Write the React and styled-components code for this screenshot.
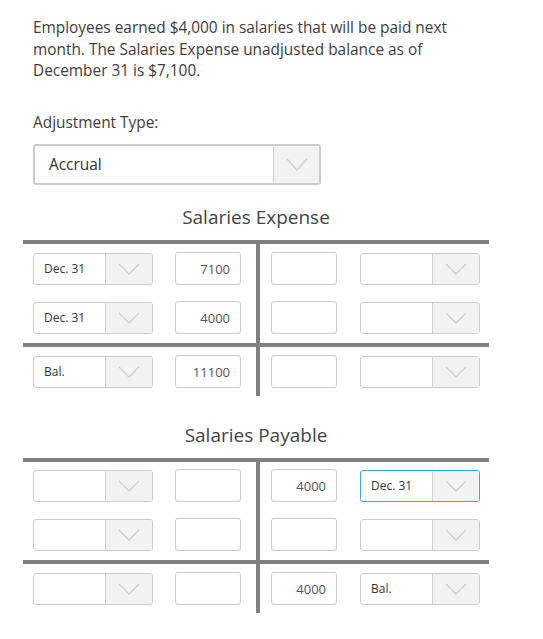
import styled, { createGlobalStyle } from "styled-components";

const GlobalStyle = createGlobalStyle`
  body {
    margin: 0;
    background: #fff;
    font-family: "Open Sans", "Liberation Sans", sans-serif;
    color: #333;
  }
`

const Page = styled.div`
  padding: 17px 0 20px 23px;
  width: 466px;
`

const Question = styled.p`
  margin: 0 0 0 10px;
  font-size: 15.4px;
  line-height: 21.5px;
  color: #3d3d3d;
`

const Label = styled.div`
  margin: 30px 0 0 10px;
  font-size: 15.4px;
  line-height: 22px;
  color: #3d3d3d;
`

const SelectBox = styled.div`
  display: flex;
  box-sizing: border-box;
  width: ${p => p.$width}px;
  height: ${p => p.$height}px;
  border: ${p => p.$thick ? 2 : 1}px solid ${p => p.$focus ? "#3aabd9" : "#cccccc"};
  border-radius: 3px;
  background: #fff;
  overflow: hidden;
`

const SelectValue = styled.div`
  flex: 1;
  display: flex;
  align-items: center;
  padding-left: ${p => p.$pad}px;
  font-size: ${p => p.$size}px;
  color: #333;
`

const SelectButton = styled.div`
  width: ${p => p.$width}px;
  display: flex;
  align-items: center;
  justify-content: center;
  background: #f2f2f2;
  border-left: 1px solid #d0d0d0;
`

const MainSelectWrap = styled.div`
  margin: 10px 0 0 10px;
`

const Title = styled.div`
  margin: 19px 0 10px;
  text-align: center;
  font-size: 19px;
  line-height: 26px;
  color: #444;
`

const Account = styled.div`
  border-top: 4px solid #808080;
  margin-bottom: 26px;
`

const Section = styled.div`
  display: grid;
  grid-template-columns: 233px 4px 229px;
`

const Divider = styled.div`
  background: #808080;
`

const HLine = styled.div`
  height: 4px;
  background: #808080;
`

const Side = styled.div`
  display: flex;
  flex-direction: column;
  gap: 17px;
  padding: ${p => p.$top}px 0 ${p => p.$bottom}px ${p => p.$left}px;
`

const Row = styled.div`
  display: flex;
  align-items: center;
  gap: ${p => p.$gap}px;
  height: 32px;
`

const AmountBox = styled.div`
  box-sizing: border-box;
  width: 66px;
  height: 33px;
  border: 1px solid #cccccc;
  border-radius: 3px;
  display: flex;
  align-items: center;
  justify-content: flex-end;
  padding-right: 10px;
  font-size: 13px;
  color: #555;
`

function Chevron({ w = 20, h = 10 }) {
  return (
    <svg width={w + 2} height={h + 2} viewBox={`0 0 ${w + 2} ${h + 2}`}>
      <polyline
        points={`1,1 ${w / 2 + 1},${h + 1} ${w + 1},1`}
        fill="none"
        stroke="#cfcfcf"
        strokeWidth="1.3"
      />
    </svg>
  )
}

function Dropdown({ value, focus }) {
  return (
    <SelectBox $width={120} $height={32} $focus={focus}>
      <SelectValue $pad={10} $size={12}>{value}</SelectValue>
      <SelectButton $width={46}>
        <Chevron w={20} h={10} />
      </SelectButton>
    </SelectBox>
  )
}

function LeftEntry({ date, amount }) {
  return (
    <Row $gap={22}>
      <Dropdown value={date} />
      <AmountBox>{amount}</AmountBox>
    </Row>
  )
}

function RightEntry({ date, amount, focus }) {
  return (
    <Row $gap={23}>
      <AmountBox>{amount}</AmountBox>
      <Dropdown value={date} focus={focus} />
    </Row>
  )
}

function TAccount({ debits, credits, debitBal, creditBal, firstPad }) {
  return (
    <Account>
      <Section>
        <Side $top={firstPad} $bottom={9} $left={10}>
          {debits.map((d, i) => <LeftEntry key={i} {...d} />)}
        </Side>
        <Divider />
        <Side $top={firstPad} $bottom={9} $left={11}>
          {credits.map((c, i) => <RightEntry key={i} {...c} />)}
        </Side>
      </Section>
      <HLine />
      <Section>
        <Side $top={9} $bottom={8} $left={10}>
          <LeftEntry {...debitBal} />
        </Side>
        <Divider />
        <Side $top={9} $bottom={8} $left={11}>
          <RightEntry {...creditBal} />
        </Side>
      </Section>
    </Account>
  )
}

export default function App() {
  return (
    <Page>
      <GlobalStyle />
      <Question>
        Employees earned $4,000 in salaries that will be paid next month. The Salaries
        Expense unadjusted balance as of December 31 is $7,100.
      </Question>
      <Label>Adjustment Type:</Label>
      <MainSelectWrap>
        <SelectBox $width={288} $height={41} $thick>
          <SelectValue $pad={14} $size={15.4}>Accrual</SelectValue>
          <SelectButton $width={45}>
            <Chevron w={20} h={11} />
          </SelectButton>
        </SelectBox>
      </MainSelectWrap>

      <Title>Salaries Expense</Title>
      <TAccount
        firstPad={9}
        debits={[{ date: "Dec. 31", amount: "7100" }, { date: "Dec. 31", amount: "4000" }]}
        credits={[{}, {}]}
        debitBal={{ date: "Bal.", amount: "11100" }}
        creditBal={{}}
      />

      <Title>Salaries Payable</Title>
      <TAccount
        firstPad={8}
        debits={[{}, {}]}
        credits={[{ date: "Dec. 31", amount: "4000", focus: true }, {}]}
        debitBal={{}}
        creditBal={{ date: "Bal.", amount: "4000" }}
      />
    </Page>
  )
}
